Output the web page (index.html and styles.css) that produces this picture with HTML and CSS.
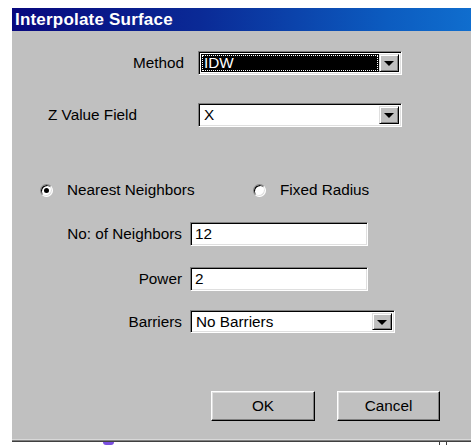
FILE: index.html
```html
<!DOCTYPE html>
<html>
<head>
<meta charset="utf-8">
<title>Interpolate Surface</title>
<link rel="stylesheet" href="styles.css">
</head>
<body>
<div class="dialog">
  <div class="titlebar">Interpolate Surface</div>
  <div class="content">
    <div class="row row-method">
      <span class="label label-method">Method</span>
      <div class="combo combo-wide focused">
        <div class="combo-value"><span class="focus-ring">IDW</span></div>
        <div class="combo-btn"><span class="arrow"></span></div>
      </div>
    </div>
    <div class="row row-z">
      <span class="label label-z">Z Value Field</span>
      <div class="combo combo-wide">
        <div class="combo-value">X</div>
        <div class="combo-btn"><span class="arrow"></span></div>
      </div>
    </div>
    <div class="row row-radios">
      <label class="radio radio-nearest"><span class="radio-dot checked"></span>Nearest Neighbors</label>
      <label class="radio radio-fixed"><span class="radio-dot"></span>Fixed Radius</label>
    </div>
    <div class="row row-field row-neighbors">
      <span class="label label-field">No: of Neighbors</span>
      <div class="textbox">12</div>
    </div>
    <div class="row row-field row-power">
      <span class="label label-field">Power</span>
      <div class="textbox">2</div>
    </div>
    <div class="row row-field row-barriers">
      <span class="label label-field">Barriers</span>
      <div class="combo combo-barriers">
        <div class="combo-value">No Barriers</div>
        <div class="combo-btn"><span class="arrow"></span></div>
      </div>
    </div>
    <div class="row row-buttons">
      <button class="btn btn-ok">OK</button>
      <button class="btn btn-cancel">Cancel</button>
    </div>
  </div>
</div>
<div class="desktop">
  <span class="desk-icon"></span>
  <span class="desk-frame"></span>
</div>
</body>
</html>
```
FILE: styles.css
```css
html, body {
  margin: 0;
  padding: 0;
  background: #ffffff;
}

body {
  width: 471px;
  height: 445px;
  overflow: hidden;
  padding: 8px 0 0 12px;
  box-sizing: border-box;
  font-family: "Liberation Sans", Arial, sans-serif;
  font-size: 15.3px;
  color: #000;
}

.dialog {
  width: 470px;
  height: 434px;
  background: #c0c0c0;
  display: flex;
  flex-direction: column;
  box-sizing: border-box;
  border-bottom: 1px solid #404040;
  box-shadow: inset 0 -1px 0 #808080, inset 0 -2px 0 #d8d8d8;
}

.titlebar {
  height: 23px;
  flex: none;
  background: linear-gradient(to right, #08087e 0%, #0a2a96 40%, #0c5cc0 80%, #1070d0 100%);
  color: #fff;
  font-weight: bold;
  font-size: 17px;
  line-height: 23px;
  padding-left: 3px;
  letter-spacing: 0.2px;
}

.content {
  position: relative;
  flex: 1;
}

.row {
  display: flex;
  align-items: center;
}

.label {
  white-space: nowrap;
  line-height: 18px;
}

/* Method */
.row-method {
  margin-top: 20px;
  padding-left: 110px;
}
.label-method {
  width: 62px;
  text-align: right;
  margin-right: 14px;
}

/* Z value field */
.row-z {
  margin-top: 28px;
  padding-left: 36px;
}
.label-z {
  width: 150px;
}

/* combos */
.combo {
  height: 24px;
  box-sizing: border-box;
  display: flex;
  background: #fff;
  border-top: 1px solid #808080;
  border-left: 1px solid #808080;
  border-right: 1px solid #fff;
  border-bottom: 1px solid #fff;
  box-shadow: inset 1px 1px 0 #000, inset -1px -1px 0 #dfdfdf;
  padding: 2px;
}
.combo-wide {
  width: 204px;
}
.combo-barriers {
  width: 205px;
  height: 23px;
}
.combo-value {
  flex: 1;
  padding-left: 3px;
  line-height: 18px;
  white-space: nowrap;
}
.combo-barriers .combo-value {
  line-height: 17px;
}
.focused .combo-value {
  background: #000;
  color: #fff;
  padding: 1px;
  display: flex;
}
.focus-ring {
  flex: 1;
  border: 1px dotted #fff;
  line-height: 14px;
  padding-left: 1px;
}
.combo-btn {
  width: 20px;
  flex: none;
  background: #c0c0c0;
  box-sizing: border-box;
  border-top: 1px solid #dfdfdf;
  border-left: 1px solid #dfdfdf;
  border-right: 1px solid #000;
  border-bottom: 1px solid #000;
  box-shadow: inset 1px 1px 0 #fff, inset -1px -1px 0 #808080;
  display: flex;
  align-items: center;
  justify-content: center;
}
.arrow {
  width: 0;
  height: 0;
  border-left: 5px solid transparent;
  border-right: 5px solid transparent;
  border-top: 5px solid #000;
  margin-top: 1px;
}

/* radios */
.row-radios {
  margin-top: 54px;
  padding-left: 28px;
  line-height: 18px;
}
.radio {
  display: flex;
  align-items: center;
  white-space: nowrap;
}
.radio-nearest {
  width: 213px;
}
.radio-dot {
  width: 13px;
  height: 13px;
  box-sizing: border-box;
  border-radius: 50%;
  background: #fff;
  border: 1px solid;
  border-color: #808080 #fff #fff #808080;
  box-shadow: inset 1px 1px 0 #000, inset -1px -1px 0 #dfdfdf;
  margin-right: 14px;
  position: relative;
}
.radio-dot.checked::after {
  content: "";
  position: absolute;
  left: 3px;
  top: 3px;
  width: 5px;
  height: 5px;
  border-radius: 50%;
  background: #000;
}

/* labelled fields */
.row-field {
  padding-left: 40px;
}
.label-field {
  width: 130px;
  text-align: right;
  margin-right: 8px;
}
.row-neighbors {
  margin-top: 23px;
}
.row-power {
  margin-top: 21px;
}
.row-barriers {
  margin-top: 19px;
}
.textbox {
  width: 178px;
  height: 24px;
  box-sizing: border-box;
  background: #fff;
  border-top: 1px solid #808080;
  border-left: 1px solid #808080;
  border-right: 1px solid #fff;
  border-bottom: 1px solid #fff;
  box-shadow: inset 1px 1px 0 #000, inset -1px -1px 0 #dfdfdf;
  padding: 2px 4px;
  line-height: 18px;
}

/* buttons */
.row-buttons {
  margin-top: 58px;
  padding-left: 199px;
  gap: 22px;
}
.btn {
  height: 30px;
  box-sizing: border-box;
  font-family: "Liberation Sans", Arial, sans-serif;
  font-size: 15.3px;
  background: #c0c0c0;
  border-top: 1px solid #fff;
  border-left: 1px solid #fff;
  border-right: 1px solid #000;
  border-bottom: 1px solid #000;
  box-shadow: inset -1px -1px 0 #808080, inset 1px 1px 0 #dfdfdf;
  padding: 0;
  color: #000;
}
.btn-ok {
  width: 104px;
}
.btn-cancel {
  width: 103px;
}

/* strip of desktop below the dialog */
.desktop {
  position: relative;
  height: 4px;
}
.desk-icon {
  position: absolute;
  left: 91px;
  top: 0;
  width: 11px;
  height: 3px;
  background: #7a4fe0;
  border-radius: 0 0 3px 3px;
}
.desk-frame {
  position: absolute;
  left: 427px;
  top: 0;
  width: 6px;
  height: 4px;
  border-left: 1px solid #404040;
  border-right: 1px solid #404040;
}
```
